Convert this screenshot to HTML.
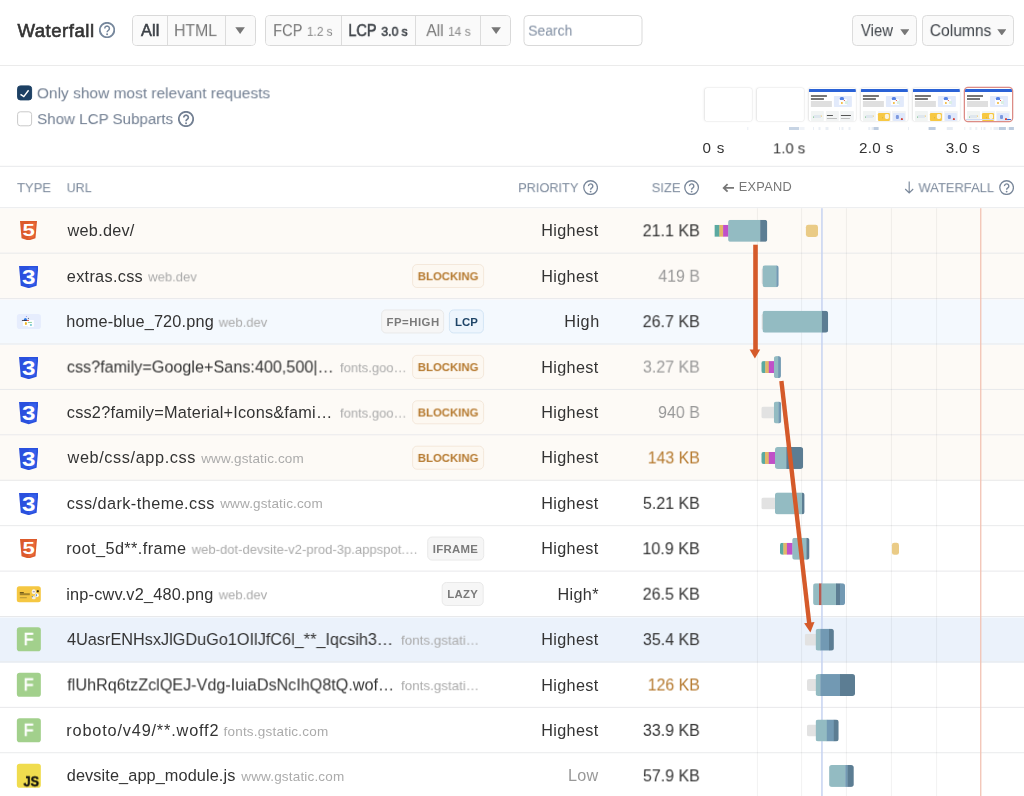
<!DOCTYPE html>
<html lang="en"><head><meta charset="utf-8"><title>Waterfall</title>
<style>
*{box-sizing:border-box;margin:0;padding:0}
html,body{width:1024px;height:796px;overflow:hidden;background:#fff}
body{font-family:"Liberation Sans",sans-serif;color:#333;position:relative}
.abs,.t,.grp,.search,.btn,.cb,.frame,.tick,.row,.ico,.thumb,.sq,.badge,.grid,.seg2,.bar2{position:absolute}
.t{white-space:nowrap;line-height:1;display:block;transform-origin:0 50%;will-change:transform}
.toolbar{position:absolute;left:0;top:0;width:1024px;height:66px;border-bottom:1px solid #ebebeb}
.grp{top:15px;height:31px;border:1px solid #d9d9d9;border-radius:4.5px;background:#fafafa;display:flex;overflow:hidden}
.grp .seg{height:100%;border-right:1px solid #dcdcdc;background:#fafafa}
.grp .seg.on{background:#fbfbfb}
.grp .seg.last{flex:1;border-right:0}
.search{top:15px;height:31px;border:1px solid #d9d9d9;border-radius:4.5px;background:#fff}
.btn{top:15px;height:31px;border:1px solid #dcdcdc;border-radius:4.5px;background:#fafafa}
.cb{width:15.2px;height:15.4px;border:1px solid #c9c9c9;border-radius:3.2px;background:#fff}
.cb.on{background:#1d4064;border-color:#1d4064}
.cb svg{position:absolute;left:-1px;top:-1px}
.frame{left:0;top:0;width:47.1px;height:32.8px;border-radius:2.6px;background:#fff;overflow:hidden;box-shadow:0 0 0 .8px rgba(0,0,0,.035),0 0 2.5px rgba(0,0,0,.09)}
.frame.cur{box-shadow:0 0 0 1.25px #dc8c86,0 0 2px rgba(220,140,134,.5);border-radius:3px}
.frame i{position:absolute;display:block}
.tick{left:0;top:127px;height:3.2px;background:#b9c9dd;display:block}
.thead{position:absolute;left:0;top:0;width:1024px;height:0}
.hline{position:absolute;left:0;top:0;width:1024px;height:1px;background:#e8e9eb}
.row{left:0;top:0;width:1024px;height:46px}
.row i{position:absolute;left:0;width:100%;top:44px;height:1px;background:#e8e9eb;display:block}
.thumb{left:0;top:0;width:23.7px;border-radius:2.5px;overflow:hidden}
.thumb i{position:absolute;display:block}
.sq{left:0;top:0;width:23.9px;height:24px;border-radius:2.8px}
.badge{left:0;top:0;height:24px;border:1px solid;border-radius:4.8px}
.grid{top:208px;width:1px;height:600px;background:rgba(0,0,0,.065);display:block}
.grid.fcp{width:1.7px;background:#c9d6f3}
.grid.lcp{width:1.4px;background:#f3c4b4}
.seg2{display:block}
.bar2{height:22.1px;border-radius:2.8px;overflow:hidden}
.bar2 i{position:absolute;top:0;height:100%;display:block}
/* filmstrip page thumbnails */
.frame .bar{left:0;top:1.1px;width:100%;height:2.6px;background:#2a62d6}
.frame .h1{left:1.7px;top:6.8px;width:16.5px;height:2.1px;background:#222;opacity:.62}
.frame .h2{left:1.7px;top:9.5px;width:13.5px;height:2.1px;background:#222;opacity:.62}
.frame .pp{left:1.7px;top:13.2px;width:21px;height:5.6px;background:#d4d4d4;opacity:.75}
.frame .hero{left:25.3px;top:8.2px;width:17.9px;height:10.5px;background:#e2eafb;border-radius:.8px}
.frame .hw{left:30px;top:11.4px;width:7.6px;height:5.2px;background:#fbfcff;border-radius:.6px}
.frame .hd1{left:31.4px;top:9.4px;width:3.6px;height:2.6px;background:#3b6fe0;border-radius:50% 50% 0 0;opacity:.85}
.frame .hd2{left:31.6px;top:13.5px;width:2.2px;height:2.2px;background:#f2b731;border-radius:50%}
.frame .hd3{left:34.6px;top:11.6px;width:1.6px;height:1.3px;background:#e2574c}
.frame .hd4{left:36px;top:13.4px;width:2.6px;height:3px;background:#d9efe4;border-radius:.5px}
.frame .c1{left:1.9px;top:23px;width:13.1px;height:10px;background:#f1f4f3;border-radius:.8px}
.frame .c1a{left:5px;top:26.6px;width:6.5px;height:3.6px;background:#dfe7ee;border-radius:.6px;box-shadow:-1.6px .6px 0 -0.9px #56b36b,1.8px -.4px 0 -1px #f2b731}
.frame .c2{left:16.6px;top:23px;width:13.2px;height:10px;background:#f2f4f4;border-radius:.8px}
.frame .c3{left:31.1px;top:23px;width:13.7px;height:10px;background:#f2f4f5;border-radius:.8px}
.frame .cy{left:17.4px;top:25.4px;width:11.7px;height:7.6px;background:#f7c843;border-radius:1.2px}
.frame .cyw{left:24.3px;top:26.4px;width:3.6px;height:5px;background:#fbf3dc;border-radius:1.4px;box-shadow:-4.2px 1.2px 0 -1.9px #7d6420}
.frame .cb2{left:32.4px;top:25.4px;width:11.4px;height:7.6px;background:#dfe8fb;border-radius:1px}
.frame .cd{left:35.4px;top:26.6px;width:2.6px;height:4.8px;background:#5b7fd6;border-radius:1px;opacity:.75}
.frame .ce{left:40.3px;top:29.6px;width:2px;height:2px;background:#d4453a;border-radius:50% 50% 0 0}
.frame .l1{left:17.8px;top:26.8px;width:6.6px;height:.9px;background:#555}
.frame .l2{left:17.8px;top:29.6px;width:10px;height:1.6px;background:#999;opacity:.6}
.frame .l3{left:32.4px;top:26.8px;width:10px;height:.9px;background:#555}
.frame .l4{left:32.4px;top:29.6px;width:9px;height:1.6px;background:#999;opacity:.6}
.frame .strip{left:1px;top:31.4px;width:28px;height:1px;background:#cfdcf5}
.frame .fab{left:41.8px;top:30.9px;width:4.4px;height:1.6px;background:#2a62d6;border-radius:.6px}
</style></head>
<body>
<header class="toolbar">
<span class="t" style="left:17px;top:21px;font-size:18.60px;color:#333;letter-spacing:0.504px;transform:translate(0.40px,0.76px);-webkit-text-stroke:0.60px #333;">Waterfall</span>
<svg class="abs" style="left:98.85px;top:22.25px" width="16.10" height="16.10" viewBox="0 0 16 16"><circle cx="8" cy="8" r="7.2" fill="none" stroke="#76879c" stroke-width="1.80"/><path d="M5.75 6.45 A2.3 2.3 0 1 1 9.3 8.35 Q8.05 9.1 8.05 10.3" fill="none" stroke="#76879c" stroke-width="1.50" stroke-linecap="butt"/><circle cx="8.05" cy="12.2" r="0.95" fill="#76879c"/></svg>
<div class="grp" style="left:132px;width:124px"><div class="seg on" style="width:35px"></div><div class="seg" style="width:58px"></div><div class="seg last"></div></div>
<span class="t" style="left:141px;top:22px;font-size:16.30px;color:#3c4147;letter-spacing:0.080px;transform:translate(0.00px,0.10px);-webkit-text-stroke:0.52px #3c4147;">All</span>
<span class="t" style="left:173px;top:22px;font-size:16.30px;color:#777;transform:translate(0.97px,0.10px) scaleX(0.9697);">HTML</span>
<svg class="abs" style="left:235.4px;top:26.9px" width="10.2" height="7.0" viewBox="0 0 10 7"><path d="M0.2 0.2h9.6L5 6.9z" fill="#777"/></svg>
<div class="grp" style="left:265px;width:246px"><div class="seg" style="width:76px"></div><div class="seg on" style="width:74px"></div><div class="seg" style="width:65px"></div><div class="seg last"></div></div>
<span class="t" style="left:273px;top:22px;font-size:16.30px;color:#777;transform:translate(0.16px,0.10px) scaleX(0.8975);">FCP</span>
<span class="t" style="left:306px;top:25px;font-size:12.80px;color:#888;transform:translate(0.92px,0.86px) scaleX(0.9260);">1.2 s</span>
<span class="t" style="left:348px;top:22px;font-size:16.30px;color:#3c4147;transform:translate(0.37px,0.10px) scaleX(0.8907);-webkit-text-stroke:0.52px #3c4147;">LCP</span>
<span class="t" style="left:381px;top:25px;font-size:12.80px;color:#3c4147;transform:translate(0.37px,0.86px) scaleX(0.9497);-webkit-text-stroke:0.58px #3c4147;">3.0 s</span>
<span class="t" style="left:426px;top:22px;font-size:16.30px;color:#777;transform:translate(0.30px,0.10px) scaleX(0.9566);">All</span>
<span class="t" style="left:448px;top:25px;font-size:12.80px;color:#888;transform:translate(0.01px,0.86px) scaleX(0.9389);">14 s</span>
<svg class="abs" style="left:490.8px;top:26.9px" width="10.2" height="7.0" viewBox="0 0 10 7"><path d="M0.2 0.2h9.6L5 6.9z" fill="#777"/></svg>
<div class="search" style="left:523px;width:119px;transform:translateX(.5px)"></div>
<span class="t" style="left:528px;top:23px;font-size:14.90px;color:#808ea2;transform:translate(0.16px,0.59px) scaleX(0.9345);">Search</span>
<div class="btn" style="left:852px;width:65px"></div>
<span class="t" style="left:860px;top:22px;font-size:16.30px;color:#3c4147;transform:translate(0.90px,0.10px) scaleX(0.9167);">View</span>
<svg class="abs" style="left:899.5px;top:28.5px" width="9.6" height="6.6" viewBox="0 0 10 7"><path d="M0.2 0.2h9.6L5 6.9z" fill="#777"/></svg>
<div class="btn" style="left:922px;width:92px"></div>
<span class="t" style="left:929px;top:22px;font-size:16.30px;color:#3c4147;transform:translate(0.77px,0.10px) scaleX(0.9597);">Columns</span>
<svg class="abs" style="left:996.8px;top:28.5px" width="9.6" height="6.6" viewBox="0 0 10 7"><path d="M0.2 0.2h9.6L5 6.9z" fill="#777"/></svg>
</header>
<section class="options">
<div class="cb on" style="left:17px;top:85px;transform:translate(.1px,.4px)"><svg width="15.2" height="15.4" viewBox="0 0 15.2 15.4"><path d="M3.4 8.9l3.3 2.3 4.8-6.3" fill="none" stroke="#fff" stroke-width="1.5" stroke-linecap="butt" stroke-linejoin="miter"/></svg></div>
<span class="t" style="left:36px;top:85px;font-size:15.50px;color:#727f92;transform:translate(0.87px,0.28px) scaleX(0.9989);">Only show most relevant requests</span>
<div class="cb" style="left:17px;top:111px;transform:translate(.1px,.3px)"></div>
<span class="t" style="left:37px;top:111px;font-size:15.50px;color:#727f92;transform:translate(0.13px,0.08px) scaleX(0.9761);">Show LCP Subparts</span>
<svg class="abs" style="left:178.30px;top:110.90px" width="16.00" height="16.00" viewBox="0 0 16 16"><circle cx="8" cy="8" r="7.2" fill="none" stroke="#727f92" stroke-width="1.80"/><path d="M5.75 6.45 A2.3 2.3 0 1 1 9.3 8.35 Q8.05 9.1 8.05 10.3" fill="none" stroke="#727f92" stroke-width="1.70" stroke-linecap="butt"/><circle cx="8.05" cy="12.2" r="0.95" fill="#727f92"/></svg>
</section>
<section class="film">
<div class="frame" style="transform:translate(704.9px,88px)"></div>
<div class="frame" style="transform:translate(756.9px,88px)"></div>
<div class="frame" style="transform:translate(808.9px,88px)"><i class="bar"></i><i class="h1"></i><i class="h2"></i><i class="pp"></i><i class="hero"></i><i class="hw"></i><i class="hd1"></i><i class="hd2"></i><i class="hd3"></i><i class="hd4"></i><i class="c1"></i><i class="c1a"></i><i class="c2"></i><i class="c3"></i><i class="l1"></i><i class="l2"></i><i class="l3"></i><i class="l4"></i></div>
<div class="frame" style="transform:translate(860.9px,88px)"><i class="bar"></i><i class="h1"></i><i class="h2"></i><i class="pp"></i><i class="hero"></i><i class="hw"></i><i class="hd1"></i><i class="hd2"></i><i class="hd3"></i><i class="hd4"></i><i class="c1"></i><i class="c1a"></i><i class="c2"></i><i class="c3"></i><i class="cy"></i><i class="cyw"></i><i class="cb2"></i><i class="cd"></i><i class="ce"></i></div>
<div class="frame" style="transform:translate(912.9px,88px)"><i class="bar"></i><i class="h1"></i><i class="h2"></i><i class="pp"></i><i class="hero"></i><i class="hw"></i><i class="hd1"></i><i class="hd2"></i><i class="hd3"></i><i class="hd4"></i><i class="c1"></i><i class="c1a"></i><i class="c2"></i><i class="c3"></i><i class="cy"></i><i class="cyw"></i><i class="cb2"></i><i class="cd"></i><i class="ce"></i></div>
<div class="frame cur" style="transform:translate(965.0px,88px)"><i class="bar"></i><i class="h1"></i><i class="h2"></i><i class="pp"></i><i class="hero"></i><i class="hw"></i><i class="hd1"></i><i class="hd2"></i><i class="hd3"></i><i class="hd4"></i><i class="c1"></i><i class="c1a"></i><i class="c2"></i><i class="c3"></i><i class="cy"></i><i class="cyw"></i><i class="cb2"></i><i class="cd"></i><i class="ce"></i><i class="strip"></i><i class="fab"></i></div>
<i class="tick" style="transform:translateX(747.3px);width:0.7px;opacity:0.30"></i>
<i class="tick" style="transform:translateX(789.0px);width:9.9px;opacity:0.80"></i>
<i class="tick" style="transform:translateX(799.5px);width:4.5px;opacity:0.22"></i>
<i class="tick" style="transform:translateX(813.0px);width:0.6px;opacity:0.30"></i>
<i class="tick" style="transform:translateX(818.5px);width:2.0px;opacity:0.30"></i>
<i class="tick" style="transform:translateX(825.5px);width:2.5px;opacity:0.30"></i>
<i class="tick" style="transform:translateX(839.0px);width:1.3px;opacity:0.30"></i>
<i class="tick" style="transform:translateX(841.5px);width:1.5px;opacity:0.30"></i>
<i class="tick" style="transform:translateX(848.5px);width:1.5px;opacity:0.30"></i>
<i class="tick" style="transform:translateX(868.3px);width:1.5px;opacity:0.30"></i>
<i class="tick" style="transform:translateX(871.5px);width:1.5px;opacity:0.35"></i>
<i class="tick" style="transform:translateX(873.6px);width:5.2px;opacity:0.95"></i>
<i class="tick" style="transform:translateX(908.0px);width:0.7px;opacity:0.30"></i>
<i class="tick" style="transform:translateX(928.6px);width:7.3px;opacity:0.95"></i>
<i class="tick" style="transform:translateX(946.8px);width:5.5px;opacity:0.35"></i>
<i class="tick" style="transform:translateX(964.3px);width:1.0px;opacity:0.25"></i>
<i class="tick" style="transform:translateX(969.5px);width:2.0px;opacity:0.25"></i>
<i class="tick" style="transform:translateX(975.3px);width:2.2px;opacity:0.25"></i>
<i class="tick" style="transform:translateX(981.0px);width:0.8px;opacity:0.30"></i>
<i class="tick" style="transform:translateX(983.5px);width:1.5px;opacity:0.30"></i>
<i class="tick" style="transform:translateX(990.5px);width:1.2px;opacity:0.30"></i>
<i class="tick" style="transform:translateX(993.5px);width:4.5px;opacity:0.30"></i>
<i class="tick" style="transform:translateX(998.9px);width:6.8px;opacity:0.95"></i>
<i class="tick" style="transform:translateX(1007.5px);width:0.8px;opacity:0.30"></i>
<i class="tick" style="transform:translateX(1008.9px);width:5.3px;opacity:0.95"></i>
<span class="t" style="left:702px;top:140px;font-size:15.20px;color:#333;letter-spacing:0.737px;transform:translate(0.52px,0.33px);">0 s</span>
<span class="t" style="left:772px;top:140px;font-size:15.20px;color:#333;transform:translate(0.87px,0.33px) scaleX(0.9832);">1.0 s</span>
<span class="t" style="left:858px;top:140px;font-size:15.20px;color:#333;letter-spacing:0.359px;transform:translate(0.99px,0.33px);">2.0 s</span>
<span class="t" style="left:945px;top:140px;font-size:15.20px;color:#333;letter-spacing:0.274px;transform:translate(0.73px,0.33px);">3.0 s</span>
</section>
<div class="thead">
<i class="hline" style="transform:translateY(165.8px)"></i><i class="hline" style="transform:translateY(207.25px)"></i>
<span class="t" style="left:16px;top:181px;font-size:13.30px;color:#79879a;transform:translate(1.00px,0.14px) scaleX(0.9803);">TYPE</span>
<span class="t" style="left:66px;top:181px;font-size:13.30px;color:#79879a;transform:translate(0.62px,0.14px) scaleX(0.9432);">URL</span>
<span class="t" style="left:518px;top:181px;font-size:13.30px;color:#79879a;transform:translate(0.21px,0.14px) scaleX(0.9573);">PRIORITY</span>
<svg class="abs" style="left:582.90px;top:180.00px" width="15.20" height="15.20" viewBox="0 0 16 16"><circle cx="8" cy="8" r="7.2" fill="none" stroke="#79879a" stroke-width="1.35"/><path d="M5.75 6.45 A2.3 2.3 0 1 1 9.3 8.35 Q8.05 9.1 8.05 10.3" fill="none" stroke="#79879a" stroke-width="1.45" stroke-linecap="butt"/><circle cx="8.05" cy="12.2" r="0.95" fill="#79879a"/></svg>
<span class="t" style="left:651px;top:181px;font-size:13.30px;color:#79879a;transform:translate(0.69px,0.14px) scaleX(0.9760);">SIZE</span>
<svg class="abs" style="left:684.40px;top:180.00px" width="15.20" height="15.20" viewBox="0 0 16 16"><circle cx="8" cy="8" r="7.2" fill="none" stroke="#79879a" stroke-width="1.35"/><path d="M5.75 6.45 A2.3 2.3 0 1 1 9.3 8.35 Q8.05 9.1 8.05 10.3" fill="none" stroke="#79879a" stroke-width="1.45" stroke-linecap="butt"/><circle cx="8.05" cy="12.2" r="0.95" fill="#79879a"/></svg>
<svg class="abs" style="left:722px;top:183px" width="13" height="10" viewBox="0 0 13 10"><path d="M12 4.9H2.2M5.6 1.1L1.7 4.9l3.9 3.8" fill="none" stroke="#777" stroke-width="1.8"/></svg>
<span class="t" style="left:738px;top:181px;font-size:12.80px;color:#777;letter-spacing:0.271px;transform:translate(0.75px,0.16px);">EXPAND</span>
<svg class="abs" style="left:903.5px;top:180.5px" width="10.4" height="13" viewBox="0 0 10.4 13"><path d="M5.2 0.5v11.4M1.2 8l4 4 4-4" fill="none" stroke="#79879a" stroke-width="1.15"/></svg>
<span class="t" style="left:918px;top:181px;font-size:13.30px;color:#79879a;transform:translate(0.50px,0.14px) scaleX(0.9732);">WATERFALL</span>
<svg class="abs" style="left:998.60px;top:179.80px" width="15.20" height="15.20" viewBox="0 0 16 16"><circle cx="8" cy="8" r="7.2" fill="none" stroke="#79879a" stroke-width="1.35"/><path d="M5.75 6.45 A2.3 2.3 0 1 1 9.3 8.35 Q8.05 9.1 8.05 10.3" fill="none" stroke="#79879a" stroke-width="1.45" stroke-linecap="butt"/><circle cx="8.05" cy="12.2" r="0.95" fill="#79879a"/></svg>
</div>
<main class="rows">
<div class="row" style="transform:translateY(208.67px);background:#fdfaf6"><i></i></div>
<svg class="ico" style="left:20.2px;top:220.56px" width="17" height="19.5" viewBox="0 0 34 39"><path d="M0 0h34l-3.1 34.7L17 39 3.1 34.7z" fill="#dc5a2b"/><path d="M17 2.8v33.3l11.2-3.4L30.9 2.8z" fill="#e8673a"/><text transform="translate(17.2 30.4) scale(1.36 1)" text-anchor="middle" font-family='"Liberation Sans",sans-serif' font-weight="700" font-size="32.5" fill="#fff">5</text></svg>
<span class="t" style="left:67px;top:222px;font-size:16.30px;color:#333;letter-spacing:0.236px;transform:translate(0.55px,0.21px);">web.dev/</span>
<span class="t" style="left:541px;top:222px;font-size:16.20px;color:#333;letter-spacing:0.330px;transform:translate(0.33px,0.30px);">Highest</span>
<span class="t" style="left:642px;top:222px;font-size:16.20px;color:#333;transform:translate(0.65px,0.30px) scaleX(0.9929);">21.1 KB</span>
<div class="row" style="transform:translateY(254.09px);background:#fdfaf6"><i></i></div>
<svg class="ico" style="left:19.1px;top:266.08px" width="19.4" height="22.2" viewBox="0 0 34 39"><path d="M0 0h34l-3.1 34.7L17 39 3.1 34.7z" fill="#2a50de"/><path d="M17 2.8v33.3l11.2-3.4L30.9 2.8z" fill="#3560ea"/><text transform="translate(17.1 31.6) scale(1.25 1)" text-anchor="middle" font-family='"Liberation Sans",sans-serif' font-weight="700" font-size="34" fill="#fff">3</text></svg>
<span class="t" style="left:66px;top:267px;font-size:16.30px;color:#333;letter-spacing:0.295px;transform:translate(0.79px,0.63px);">extras.css</span>
<span class="t" style="left:148px;top:270px;font-size:13.50px;color:#ababab;transform:translate(0.20px,0.35px) scaleX(0.9665);">web.dev</span>
<div class="badge" style="transform:translate(412.10px,264.03px);width:72.0px;background:#fdf8f1;border-color:#f4e8db"></div>
<span class="t" style="left:417px;top:271px;font-size:11.40px;color:#b5792e;font-weight:700;transform:translate(0.75px,0.23px) scaleX(0.9970);">BLOCKING</span>
<span class="t" style="left:541px;top:267px;font-size:16.20px;color:#333;letter-spacing:0.330px;transform:translate(0.33px,0.72px);">Highest</span>
<span class="t" style="left:658px;top:267px;font-size:16.20px;color:#999;transform:translate(0.35px,0.72px) scaleX(0.9806);">419 B</span>
<div class="row" style="transform:translateY(299.51px);background:#f4f9fe"><i></i></div>
<div class="thumb" style="transform:translate(16.9px,313.95px);width:24.1px;height:15.1px;background:#e6edfd;border-radius:2.8px"><i style="left:10.9px;top:5.5px;width:6.5px;height:7.4px;background:#fdfeff;border-radius:.6px"></i><i style="left:5.7px;top:7.4px;width:5.3px;height:4.7px;background:#fff"></i><i style="left:6.6px;top:3.7px;width:3.4px;height:3px;background:#2f7be6;border-radius:1.6px 1.6px 0 0"></i><i style="left:5.3px;top:6.2px;width:4.9px;height:1.1px;background:#23262e;opacity:.8"></i><i style="left:10.1px;top:6.1px;width:2.3px;height:1.2px;background:#e5463c"></i><i style="left:11px;top:3.6px;width:1.1px;height:1.8px;background:#3a3f4a;opacity:.8"></i><i style="left:9px;top:2px;width:1.1px;height:1.1px;background:#6a6cf0;border-radius:50%;opacity:.8"></i><i style="left:7.9px;top:8.3px;width:2.4px;height:2.4px;background:#f0b92c;border-radius:50%"></i><i style="left:11.3px;top:8.4px;width:3.8px;height:.8px;background:#8fd2a0"></i><i style="left:13.1px;top:10.2px;width:1.7px;height:2.2px;background:#86cfd6;border-radius:.4px"></i></div>
<span class="t" style="left:66px;top:313px;font-size:16.30px;color:#333;letter-spacing:0.164px;transform:translate(0.28px,0.05px);">home-blue_720.png</span>
<span class="t" style="left:218px;top:315px;font-size:13.50px;color:#ababab;transform:translate(0.70px,0.77px) scaleX(0.9665);">web.dev</span>
<div class="badge" style="transform:translate(381.10px,309.45px);width:63.2px;background:#f6f6f6;border-color:#e9e9e9"></div>
<span class="t" style="left:386px;top:316px;font-size:11.40px;color:#7a7a7a;font-weight:700;letter-spacing:0.493px;transform:translate(0.55px,0.65px);">FP=HIGH</span>
<div class="badge" style="transform:translate(448.90px,309.45px);width:35.2px;background:#edf5fd;border-color:#d3e5f5"></div>
<span class="t" style="left:454px;top:316px;font-size:11.40px;color:#1f4568;font-weight:700;letter-spacing:0.052px;transform:translate(0.95px,0.65px);">LCP</span>
<span class="t" style="left:564px;top:313px;font-size:16.20px;color:#333;letter-spacing:0.553px;transform:translate(0.23px,0.14px);">High</span>
<span class="t" style="left:642px;top:313px;font-size:16.20px;color:#333;transform:translate(0.65px,0.14px) scaleX(0.9929);">26.7 KB</span>
<div class="row" style="transform:translateY(344.93px);background:#fdfaf6"><i></i></div>
<svg class="ico" style="left:19.1px;top:356.92px" width="19.4" height="22.2" viewBox="0 0 34 39"><path d="M0 0h34l-3.1 34.7L17 39 3.1 34.7z" fill="#2a50de"/><path d="M17 2.8v33.3l11.2-3.4L30.9 2.8z" fill="#3560ea"/><text transform="translate(17.1 31.6) scale(1.25 1)" text-anchor="middle" font-family='"Liberation Sans",sans-serif' font-weight="700" font-size="34" fill="#fff">3</text></svg>
<span class="t" style="left:66px;top:358px;font-size:16.30px;color:#333;transform:translate(0.79px,0.47px) scaleX(0.9941);">css?family=Google+Sans:400,500|…</span>
<span class="t" style="left:340px;top:361px;font-size:13.50px;color:#ababab;transform:translate(0.00px,0.19px) scaleX(0.9650);">fonts.goo…</span>
<div class="badge" style="transform:translate(412.10px,354.87px);width:72.0px;background:#fdf8f1;border-color:#f4e8db"></div>
<span class="t" style="left:417px;top:362px;font-size:11.40px;color:#b5792e;font-weight:700;transform:translate(0.75px,0.07px) scaleX(0.9970);">BLOCKING</span>
<span class="t" style="left:541px;top:358px;font-size:16.20px;color:#333;letter-spacing:0.330px;transform:translate(0.33px,0.56px);">Highest</span>
<span class="t" style="left:642px;top:358px;font-size:16.20px;color:#999;transform:translate(0.90px,0.56px) scaleX(0.9884);">3.27 KB</span>
<div class="row" style="transform:translateY(390.35px);background:#fdfaf6"><i></i></div>
<svg class="ico" style="left:19.1px;top:402.34px" width="19.4" height="22.2" viewBox="0 0 34 39"><path d="M0 0h34l-3.1 34.7L17 39 3.1 34.7z" fill="#2a50de"/><path d="M17 2.8v33.3l11.2-3.4L30.9 2.8z" fill="#3560ea"/><text transform="translate(17.1 31.6) scale(1.25 1)" text-anchor="middle" font-family='"Liberation Sans",sans-serif' font-weight="700" font-size="34" fill="#fff">3</text></svg>
<span class="t" style="left:66px;top:403px;font-size:16.30px;color:#333;letter-spacing:0.215px;transform:translate(0.79px,0.89px);">css2?family=Material+Icons&amp;fami…</span>
<span class="t" style="left:340px;top:406px;font-size:13.50px;color:#ababab;transform:translate(0.00px,0.61px) scaleX(0.9650);">fonts.goo…</span>
<div class="badge" style="transform:translate(412.10px,400.29px);width:72.0px;background:#fdf8f1;border-color:#f4e8db"></div>
<span class="t" style="left:417px;top:407px;font-size:11.40px;color:#b5792e;font-weight:700;transform:translate(0.75px,0.49px) scaleX(0.9970);">BLOCKING</span>
<span class="t" style="left:541px;top:403px;font-size:16.20px;color:#333;letter-spacing:0.330px;transform:translate(0.33px,0.98px);">Highest</span>
<span class="t" style="left:658px;top:403px;font-size:16.20px;color:#999;transform:translate(0.05px,0.98px) scaleX(0.9879);">940 B</span>
<div class="row" style="transform:translateY(435.77px);background:#fdfaf6"><i></i></div>
<svg class="ico" style="left:19.1px;top:447.76px" width="19.4" height="22.2" viewBox="0 0 34 39"><path d="M0 0h34l-3.1 34.7L17 39 3.1 34.7z" fill="#2a50de"/><path d="M17 2.8v33.3l11.2-3.4L30.9 2.8z" fill="#3560ea"/><text transform="translate(17.1 31.6) scale(1.25 1)" text-anchor="middle" font-family='"Liberation Sans",sans-serif' font-weight="700" font-size="34" fill="#fff">3</text></svg>
<span class="t" style="left:67px;top:449px;font-size:16.30px;color:#333;letter-spacing:0.598px;transform:translate(0.55px,0.31px);">web/css/app.css</span>
<span class="t" style="left:201px;top:452px;font-size:13.50px;color:#ababab;letter-spacing:0.140px;transform:translate(0.21px,0.03px);">www.gstatic.com</span>
<div class="badge" style="transform:translate(412.10px,445.71px);width:72.0px;background:#fdf8f1;border-color:#f4e8db"></div>
<span class="t" style="left:417px;top:452px;font-size:11.40px;color:#b5792e;font-weight:700;transform:translate(0.75px,0.91px) scaleX(0.9970);">BLOCKING</span>
<span class="t" style="left:541px;top:449px;font-size:16.20px;color:#333;letter-spacing:0.330px;transform:translate(0.33px,0.40px);">Highest</span>
<span class="t" style="left:647px;top:449px;font-size:16.20px;color:#b5792e;transform:translate(0.71px,0.40px) scaleX(0.9816);">143 KB</span>
<div class="row" style="transform:translateY(481.19px);background:#fff"><i></i></div>
<svg class="ico" style="left:19.1px;top:493.18px" width="19.4" height="22.2" viewBox="0 0 34 39"><path d="M0 0h34l-3.1 34.7L17 39 3.1 34.7z" fill="#2a50de"/><path d="M17 2.8v33.3l11.2-3.4L30.9 2.8z" fill="#3560ea"/><text transform="translate(17.1 31.6) scale(1.25 1)" text-anchor="middle" font-family='"Liberation Sans",sans-serif' font-weight="700" font-size="34" fill="#fff">3</text></svg>
<span class="t" style="left:66px;top:494px;font-size:16.30px;color:#333;letter-spacing:0.431px;transform:translate(0.79px,0.73px);">css/dark-theme.css</span>
<span class="t" style="left:220px;top:497px;font-size:13.50px;color:#ababab;letter-spacing:0.140px;transform:translate(0.21px,0.45px);">www.gstatic.com</span>
<span class="t" style="left:541px;top:494px;font-size:16.20px;color:#333;letter-spacing:0.330px;transform:translate(0.33px,0.82px);">Highest</span>
<span class="t" style="left:642px;top:494px;font-size:16.20px;color:#333;transform:translate(0.90px,0.82px) scaleX(0.9884);">5.21 KB</span>
<div class="row" style="transform:translateY(526.61px);background:#fff"><i></i></div>
<svg class="ico" style="left:20.2px;top:538.50px" width="17" height="19.5" viewBox="0 0 34 39"><path d="M0 0h34l-3.1 34.7L17 39 3.1 34.7z" fill="#dc5a2b"/><path d="M17 2.8v33.3l11.2-3.4L30.9 2.8z" fill="#e8673a"/><text transform="translate(17.2 30.4) scale(1.36 1)" text-anchor="middle" font-family='"Liberation Sans",sans-serif' font-weight="700" font-size="32.5" fill="#fff">5</text></svg>
<span class="t" style="left:66px;top:540px;font-size:16.30px;color:#333;letter-spacing:0.408px;transform:translate(0.28px,0.15px);">root_5d**.frame</span>
<span class="t" style="left:191px;top:542px;font-size:13.50px;color:#ababab;transform:translate(0.70px,0.87px) scaleX(0.9671);">web-dot-devsite-v2-prod-3p.appspot.…</span>
<div class="badge" style="transform:translate(427.20px,536.55px);width:56.9px;background:#f6f6f6;border-color:#e9e9e9"></div>
<span class="t" style="left:432px;top:543px;font-size:11.40px;color:#7a7a7a;font-weight:700;letter-spacing:0.291px;transform:translate(0.85px,0.75px);">IFRAME</span>
<span class="t" style="left:541px;top:540px;font-size:16.20px;color:#333;letter-spacing:0.330px;transform:translate(0.33px,0.24px);">Highest</span>
<span class="t" style="left:642px;top:540px;font-size:16.20px;color:#333;transform:translate(0.39px,0.24px) scaleX(0.9973);">10.9 KB</span>
<div class="row" style="transform:translateY(572.03px);background:#fff"><i></i></div>
<div class="thumb" style="transform:translate(16.8px,586.22px);height:16px;background:#f5c742"><i style="left:2.6px;top:5.6px;width:4px;height:1px;background:#4a3c10"></i><i style="left:2.6px;top:7.4px;width:10px;height:1.6px;background:#5e4d18;opacity:.55"></i><i style="left:2.6px;top:10.6px;width:7.5px;height:.8px;background:#8c7630;opacity:.6"></i><i style="left:14.6px;top:3.2px;width:4.6px;height:4.6px;background:#f7f3e6;border-radius:50%"></i><i style="left:17.6px;top:6.6px;width:4.2px;height:4.2px;background:#fbf9f0;border-radius:50%"></i><i style="left:15.4px;top:9.6px;width:3.6px;height:3.4px;background:#f3efe2;border-radius:50%"></i><i style="left:19.3px;top:7.6px;width:1.2px;height:2.2px;background:#4a78d8"></i><i style="left:14.6px;top:9.6px;width:1.8px;height:1.4px;background:#3b6fd0"></i><i style="left:15.8px;top:4.6px;width:2.4px;height:1.2px;background:#9a8fb0"></i><i style="left:20.3px;top:4.4px;width:2.2px;height:1.3px;background:#2a2410;border-radius:.4px"></i></div>
<span class="t" style="left:66px;top:585px;font-size:16.30px;color:#333;letter-spacing:0.198px;transform:translate(0.28px,0.57px);">inp-cwv.v2_480.png</span>
<span class="t" style="left:218px;top:588px;font-size:13.50px;color:#ababab;transform:translate(0.70px,0.29px) scaleX(0.9645);">web.dev</span>
<div class="badge" style="transform:translate(441.70px,581.97px);width:42.4px;background:#f6f6f6;border-color:#e9e9e9"></div>
<span class="t" style="left:447px;top:589px;font-size:11.40px;color:#7a7a7a;font-weight:700;letter-spacing:0.213px;transform:translate(0.35px,0.17px);">LAZY</span>
<span class="t" style="left:557px;top:585px;font-size:16.20px;color:#333;letter-spacing:0.368px;transform:translate(0.43px,0.66px);">High*</span>
<span class="t" style="left:642px;top:585px;font-size:16.20px;color:#333;transform:translate(0.65px,0.66px) scaleX(0.9929);">26.5 KB</span>
<div class="row" style="transform:translateY(617.45px);background:#ebf2fb"><i></i></div>
<div class="sq" style="transform:translate(16.85px,627.34px);background:#a2d08c"></div><span class="t" style="left:23px;top:630px;font-size:16.40px;color:#fff;transform:translate(0.65px,0.96px) scaleX(0.9756);-webkit-text-stroke:0.74px #fff;">F</span>
<span class="t" style="left:67px;top:630px;font-size:16.30px;color:#333;transform:translate(0.05px,0.99px) scaleX(0.9984);">4UasrENHsxJlGDuGo1OIlJfC6l_**_Iqcsih3…</span>
<span class="t" style="left:401px;top:633px;font-size:13.50px;color:#ababab;transform:translate(0.00px,0.71px) scaleX(0.9922);">fonts.gstati…</span>
<span class="t" style="left:541px;top:631px;font-size:16.20px;color:#333;letter-spacing:0.330px;transform:translate(0.33px,0.08px);">Highest</span>
<span class="t" style="left:642px;top:631px;font-size:16.20px;color:#333;transform:translate(0.90px,0.08px) scaleX(0.9884);">35.4 KB</span>
<div class="row" style="transform:translateY(662.87px);background:#fff"><i></i></div>
<div class="sq" style="transform:translate(16.85px,672.76px);background:#a2d08c"></div><span class="t" style="left:23px;top:676px;font-size:16.40px;color:#fff;transform:translate(0.65px,0.38px) scaleX(0.9756);-webkit-text-stroke:0.74px #fff;">F</span>
<span class="t" style="left:67px;top:676px;font-size:16.30px;color:#333;transform:translate(0.30px,0.41px) scaleX(0.9924);">flUhRq6tzZclQEJ-Vdg-IuiaDsNcIhQ8tQ.wof…</span>
<span class="t" style="left:401px;top:679px;font-size:13.50px;color:#ababab;transform:translate(0.00px,0.13px) scaleX(0.9922);">fonts.gstati…</span>
<span class="t" style="left:541px;top:676px;font-size:16.20px;color:#333;letter-spacing:0.330px;transform:translate(0.33px,0.50px);">Highest</span>
<span class="t" style="left:647px;top:676px;font-size:16.20px;color:#b5792e;transform:translate(0.71px,0.50px) scaleX(0.9816);">126 KB</span>
<div class="row" style="transform:translateY(708.29px);background:#fff"><i></i></div>
<div class="sq" style="transform:translate(16.85px,718.18px);background:#a2d08c"></div><span class="t" style="left:23px;top:721px;font-size:16.40px;color:#fff;transform:translate(0.65px,0.80px) scaleX(0.9756);-webkit-text-stroke:0.74px #fff;">F</span>
<span class="t" style="left:66px;top:721px;font-size:16.30px;color:#333;letter-spacing:0.830px;transform:translate(0.28px,0.83px);">roboto/v49/**.woff2</span>
<span class="t" style="left:223px;top:724px;font-size:13.50px;color:#ababab;letter-spacing:0.213px;transform:translate(0.50px,0.55px);">fonts.gstatic.com</span>
<span class="t" style="left:541px;top:721px;font-size:16.20px;color:#333;letter-spacing:0.330px;transform:translate(0.33px,0.92px);">Highest</span>
<span class="t" style="left:642px;top:721px;font-size:16.20px;color:#333;transform:translate(0.90px,0.92px) scaleX(0.9884);">33.9 KB</span>
<div class="row" style="transform:translateY(753.71px);background:#fff"><i></i></div>
<div class="sq" style="transform:translate(16.85px,763.80px);background:#f0dc4e"></div><span class="t" style="left:23px;top:773px;font-size:15.40px;color:#111;font-weight:700;transform:translate(0.50px,0.36px) scaleX(0.8302);-webkit-text-stroke:.45px #111;">JS</span>
<span class="t" style="left:66px;top:767px;font-size:16.30px;color:#333;letter-spacing:0.099px;transform:translate(0.79px,0.25px);">devsite_app_module.js</span>
<span class="t" style="left:241px;top:769px;font-size:13.50px;color:#ababab;letter-spacing:0.176px;transform:translate(0.21px,0.97px);">www.gstatic.com</span>
<span class="t" style="left:568px;top:767px;font-size:16.20px;color:#999;letter-spacing:0.175px;transform:translate(0.03px,0.34px);">Low</span>
<span class="t" style="left:642px;top:767px;font-size:16.20px;color:#333;transform:translate(0.90px,0.34px) scaleX(0.9884);">57.9 KB</span>
</main>
<svg class="abs chart" style="left:700px;top:200px" width="324" height="596" viewBox="700 200 324 596">
<rect x="756.90" y="208.2" width="1" height="590" fill="#000" fill-opacity=".055"/>
<rect x="801.10" y="208.2" width="1" height="590" fill="#000" fill-opacity=".055"/>
<rect x="845.90" y="208.2" width="1" height="590" fill="#000" fill-opacity=".055"/>
<rect x="890.90" y="208.2" width="1" height="590" fill="#000" fill-opacity=".055"/>
<rect x="936.10" y="208.2" width="1" height="590" fill="#000" fill-opacity=".055"/>
<rect x="821.2" y="208.2" width="1.5" height="590" fill="#c6d3f1"/>
<rect x="980.1" y="208.2" width="1.3" height="590" fill="#f2c3b3"/>
<defs><clipPath id="s0"><rect x="714.40" y="224.86" width="16.90" height="12" rx="0.0"/></clipPath><clipPath id="m0"><rect x="728.10" y="219.86" width="39.10" height="22" rx="2.7"/></clipPath><clipPath id="m1"><rect x="762.50" y="265.28" width="16.10" height="22" rx="2.7"/></clipPath><clipPath id="m2"><rect x="762.50" y="310.70" width="65.60" height="22" rx="2.7"/></clipPath><clipPath id="s3"><rect x="761.30" y="361.12" width="15.80" height="12" rx="2.2"/></clipPath><clipPath id="m3"><rect x="773.90" y="356.12" width="7.00" height="22" rx="2.7"/></clipPath><clipPath id="s4"><rect x="761.30" y="406.54" width="15.70" height="12" rx="2.2"/></clipPath><clipPath id="m4"><rect x="773.80" y="401.54" width="7.40" height="22" rx="2.7"/></clipPath><clipPath id="s5"><rect x="761.30" y="451.96" width="16.90" height="12" rx="2.2"/></clipPath><clipPath id="m5"><rect x="775.00" y="446.96" width="28.10" height="22" rx="2.7"/></clipPath><clipPath id="s6"><rect x="761.30" y="497.38" width="16.90" height="12" rx="2.2"/></clipPath><clipPath id="m6"><rect x="775.00" y="492.38" width="29.50" height="22" rx="2.7"/></clipPath><clipPath id="s7"><rect x="780.00" y="542.80" width="15.40" height="12" rx="2.2"/></clipPath><clipPath id="m7"><rect x="792.20" y="537.80" width="17.20" height="22" rx="2.7"/></clipPath><clipPath id="m8"><rect x="813.10" y="583.22" width="31.90" height="22" rx="2.7"/></clipPath><clipPath id="s9"><rect x="804.70" y="633.64" width="14.10" height="12" rx="2.2"/></clipPath><clipPath id="m9"><rect x="815.60" y="628.64" width="18.20" height="22" rx="2.7"/></clipPath><clipPath id="s10"><rect x="806.90" y="679.06" width="11.90" height="12" rx="2.2"/></clipPath><clipPath id="m10"><rect x="815.60" y="674.06" width="39.40" height="22" rx="2.7"/></clipPath><clipPath id="s11"><rect x="806.90" y="724.48" width="11.90" height="12" rx="2.2"/></clipPath><clipPath id="m11"><rect x="815.60" y="719.48" width="23.00" height="22" rx="2.7"/></clipPath><clipPath id="m12"><rect x="829.10" y="764.90" width="24.60" height="22" rx="2.7"/></clipPath></defs>
<g clip-path="url(#s0)"><rect x="714.40" y="224.86" width="5.30" height="12" fill="#5ba9a0"/><rect x="719.40" y="224.86" width="4.00" height="12" fill="#e3b668"/><rect x="723.10" y="224.86" width="5.50" height="12" fill="#c050c8"/></g>
<g clip-path="url(#m0)"><rect x="728.10" y="219.86" width="32.40" height="22" fill="#93bbc2"/><rect x="760.20" y="219.86" width="7.30" height="22" fill="#5c7d93"/></g>
<rect x="805.90" y="224.81" width="12.10" height="12.1" rx="2.4" fill="#eacb86"/>
<rect x="761.70" y="268.28" width="3" height="16" rx="1.5" fill="#dcdcdc"/>
<g clip-path="url(#m1)"><rect x="762.50" y="265.28" width="14.10" height="22" fill="#93bbc2"/><rect x="776.30" y="265.28" width="2.60" height="22" fill="#7299b3"/></g>
<rect x="761.70" y="313.70" width="3" height="16" rx="1.5" fill="#dcdcdc"/>
<g clip-path="url(#m2)"><rect x="762.50" y="310.70" width="59.70" height="22" fill="#93bbc2"/><rect x="821.90" y="310.70" width="6.50" height="22" fill="#5c7d93"/></g>
<g clip-path="url(#s3)"><rect x="761.30" y="361.12" width="4.30" height="12" fill="#5ba9a0"/><rect x="765.30" y="361.12" width="3.80" height="12" fill="#e3b668"/><rect x="768.80" y="361.12" width="5.60" height="12" fill="#c050c8"/></g>
<g clip-path="url(#m3)"><rect x="773.90" y="356.12" width="4.50" height="22" fill="#93bbc2"/><rect x="778.10" y="356.12" width="3.10" height="22" fill="#7299b3"/></g>
<g clip-path="url(#s4)"><rect x="761.30" y="406.54" width="13.00" height="12" fill="#e2e2e2"/></g>
<g clip-path="url(#m4)"><rect x="773.80" y="401.54" width="4.90" height="22" fill="#93bbc2"/><rect x="778.40" y="401.54" width="3.10" height="22" fill="#7299b3"/></g>
<g clip-path="url(#s5)"><rect x="761.30" y="451.96" width="4.00" height="12" fill="#5ba9a0"/><rect x="765.00" y="451.96" width="4.10" height="12" fill="#e3b668"/><rect x="768.80" y="451.96" width="6.70" height="12" fill="#c050c8"/></g>
<g clip-path="url(#m5)"><rect x="775.00" y="446.96" width="11.60" height="22" fill="#93bbc2"/><rect x="786.30" y="446.96" width="17.10" height="22" fill="#5c7d93"/></g>
<g clip-path="url(#s6)"><rect x="761.30" y="497.38" width="14.20" height="12" fill="#e2e2e2"/></g>
<g clip-path="url(#m6)"><rect x="775.00" y="492.38" width="27.30" height="22" fill="#93bbc2"/><rect x="802.00" y="492.38" width="2.80" height="22" fill="#5c7d93"/></g>
<g clip-path="url(#s7)"><rect x="780.00" y="542.80" width="3.70" height="12" fill="#5ba9a0"/><rect x="783.40" y="542.80" width="3.80" height="12" fill="#e3b668"/><rect x="786.90" y="542.80" width="5.80" height="12" fill="#c050c8"/></g>
<g clip-path="url(#m7)"><rect x="792.20" y="537.80" width="14.50" height="22" fill="#93bbc2"/><rect x="806.40" y="537.80" width="3.30" height="22" fill="#5c7d93"/></g>
<rect x="891.90" y="542.75" width="7.10" height="12.1" rx="2.4" fill="#eacb86"/>
<g clip-path="url(#m8)"><rect x="813.10" y="583.22" width="6.20" height="22" fill="#93bbc2"/><rect x="819.00" y="583.22" width="2.80" height="22" fill="#b55c52"/><rect x="821.50" y="583.22" width="14.80" height="22" fill="#93bbc2"/><rect x="836.00" y="583.22" width="4.30" height="22" fill="#5c7d93"/><rect x="840.00" y="583.22" width="5.30" height="22" fill="#7299b3"/></g>
<g clip-path="url(#s9)"><rect x="804.70" y="633.64" width="11.40" height="12" fill="#e2e2e2"/></g>
<g clip-path="url(#m9)"><rect x="815.60" y="628.64" width="5.00" height="22" fill="#93bbc2"/><rect x="820.30" y="628.64" width="9.00" height="22" fill="#7299b3"/><rect x="829.00" y="628.64" width="5.10" height="22" fill="#5c7d93"/></g>
<g clip-path="url(#s10)"><rect x="806.90" y="679.06" width="9.20" height="12" fill="#e2e2e2"/></g>
<g clip-path="url(#m10)"><rect x="815.60" y="674.06" width="5.00" height="22" fill="#93bbc2"/><rect x="820.30" y="674.06" width="20.00" height="22" fill="#7299b3"/><rect x="840.00" y="674.06" width="15.30" height="22" fill="#5c7d93"/></g>
<g clip-path="url(#s11)"><rect x="806.90" y="724.48" width="9.20" height="12" fill="#e2e2e2"/></g>
<g clip-path="url(#m11)"><rect x="815.60" y="719.48" width="11.50" height="22" fill="#93bbc2"/><rect x="826.80" y="719.48" width="7.30" height="22" fill="#7299b3"/><rect x="833.80" y="719.48" width="5.10" height="22" fill="#5c7d93"/></g>
<g clip-path="url(#m12)"><rect x="829.10" y="764.90" width="16.50" height="22" fill="#93bbc2"/><rect x="845.30" y="764.90" width="2.60" height="22" fill="#7299b3"/><rect x="847.60" y="764.90" width="6.40" height="22" fill="#5c7d93"/></g>
<path d="M755.5 244.7V351" stroke="#d55a2a" stroke-width="4.6" fill="none"/>
<path d="M749.6 349.4h10.6L754.9 358.6z" fill="#d55a2a"/>
<path d="M781.4 381L809.3 624" stroke="#d55a2a" stroke-width="4.4" fill="none"/>
<path d="M804.1 623.3l10.4-1.2L810.4 632.4z" fill="#d55a2a"/>
</svg>
</body></html>
